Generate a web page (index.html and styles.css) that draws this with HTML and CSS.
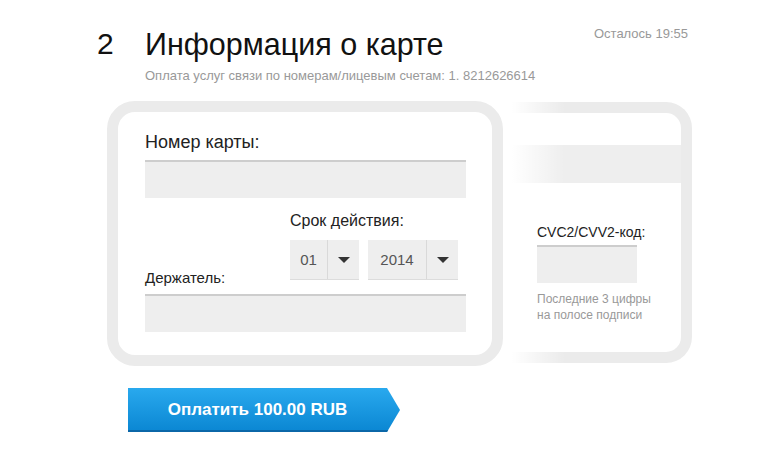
FILE: index.html
```html
<!DOCTYPE html>
<html lang="ru">
<head>
    <meta charset="UTF-8">
    <meta name="viewport" content="width=device-width, initial-scale=1.0">
    <title>Информация о карте</title>
    <link rel="stylesheet" href="styles.css">
</head>
<body>
    <div class="page">
        <div class="header">
            <div class="step">2</div>
            <h1 class="title">Информация о карте</h1>
            <div class="timer">Осталось 19:55</div>
        </div>
        <div class="subtitle">Оплата услуг связи по номерам/лицевым счетам: 1. 8212626614</div>

        <div class="cards">
            <div class="card-front">
                <div class="label-big">Номер карты:</div>
                <div class="field field-wide field-number"></div>

                <div class="row">
                    <div class="holder-label">Держатель:</div>
                    <div class="expiry">
                        <div class="label">Срок действия:</div>
                        <div class="selects">
                            <div class="select">
                                <span class="select-value month">01</span>
                                <span class="select-arrow"></span>
                            </div>
                            <div class="select">
                                <span class="select-value year">2014</span>
                                <span class="select-arrow"></span>
                            </div>
                        </div>
                    </div>
                </div>

                <div class="field field-wide"></div>
            </div>

            <div class="card-back">
                <div class="stripe"></div>
                <div class="cvc">
                    <div class="label-cvc">CVC2/CVV2-код:</div>
                    <div class="field field-cvc"></div>
                    <div class="hint">Последние 3 цифры<br>на полосе подписи</div>
                </div>
            </div>
        </div>

        <button class="pay-btn">Оплатить 100.00 RUB</button>
    </div>
</body>
</html>
```

FILE: styles.css
```css
body {
    margin: 0;
    font-family: "Liberation Sans", Arial, sans-serif;
    background-color: #fff;
    color: #222;
}

.page {
    width: 595px;
    margin-left: 97px;
    padding-top: 26px;
}

.header {
    display: flex;
    align-items: flex-start;
}

.step {
    width: 48px;
    font-size: 30px;
    line-height: 36px;
    color: #111;
}

.title {
    flex-grow: 1;
    margin: 0;
    font-size: 30.5px;
    line-height: 36px;
    font-weight: normal;
    color: #111;
}

.timer {
    margin-right: 4px;
    font-size: 13px;
    line-height: 16px;
    color: #999;
}

.subtitle {
    margin: 6px 0 0 48px;
    font-size: 13px;
    line-height: 16px;
    color: #999;
}

.cards {
    display: flex;
    align-items: flex-start;
    margin: 17px 0 0 10px;
}

.card-front {
    position: relative;
    z-index: 1;
    flex-shrink: 0;
    width: 347px;
    border: 11px solid #ebebeb;
    border-radius: 28px;
    background-color: #fff;
    padding: 19px 0 23px 27px;
}

.label-big {
    font-size: 18px;
    line-height: 22px;
    color: #222;
}

.field {
    box-sizing: border-box;
    height: 38px;
    background-color: #eeeeee;
    border-top: 2px solid #cdcdcd;
}

.field-wide {
    width: 321px;
}

.field-number {
    margin-top: 7px;
}

.row {
    display: flex;
    align-items: flex-end;
    margin-top: 13px;
}

.holder-label {
    width: 145px;
    margin-bottom: 7px;
    font-size: 15px;
    line-height: 18px;
    color: #222;
}

.expiry {
    margin-bottom: 15px;
}

.label {
    font-size: 16px;
    line-height: 20px;
    color: #222;
}

.selects {
    display: flex;
    gap: 9px;
    margin-top: 9px;
}

.select {
    display: flex;
    height: 39px;
    background-color: #eeeeee;
    box-shadow: 0 1px 0 #dcdcdc;
}

.select-value {
    display: flex;
    align-items: center;
    justify-content: center;
    font-size: 15px;
    color: #555;
    border-right: 1px solid #d9d9d9;
}

.select-value.month {
    width: 37px;
}

.select-value.year {
    width: 58px;
}

.select-arrow {
    display: flex;
    align-items: center;
    justify-content: center;
    width: 31px;
}

.select-arrow::before {
    content: "";
    border-left: 6px solid transparent;
    border-right: 6px solid transparent;
    border-top: 6px solid #333;
}

.card-back {
    position: relative;
    flex-shrink: 0;
    width: 178px;
    height: 239px;
    margin-top: 1px;
    border-top: 11px solid #ebebeb;
    border-right: 11px solid #ebebeb;
    border-bottom: 11px solid #ebebeb;
    border-radius: 0 26px 26px 0;
}

/* fade the left end of the back card */
.card-back::after {
    content: "";
    position: absolute;
    left: 0;
    top: -11px;
    bottom: -11px;
    width: 62px;
    background: linear-gradient(to right, #fff 9px, rgba(255, 255, 255, 0) 62px);
}

.stripe {
    height: 38px;
    margin-top: 32px;
    background-color: #eeeeee;
}

.cvc {
    position: relative;
    z-index: 2;
    padding-left: 34px;
    margin-top: 41px;
}

.label-cvc {
    font-size: 14px;
    line-height: 17px;
    color: #222;
}

.field-cvc {
    width: 100px;
    margin-top: 4px;
}

.hint {
    margin-top: 8px;
    font-size: 12px;
    line-height: 16px;
    color: #999;
}

.pay-btn {
    display: block;
    width: 272px;
    height: 44px;
    margin: 22px 0 0 31px;
    padding: 0 13px 0 0;
    border: none;
    background: linear-gradient(#29a9ee, #0a86d2);
    box-shadow: inset 0 -2px 0 #0b67a8;
    clip-path: polygon(0 0, 259px 0, 272px 22px, 259px 44px, 0 44px);
    color: #fff;
    font-family: "Liberation Sans", Arial, sans-serif;
    font-size: 17px;
    font-weight: bold;
    cursor: pointer;
}
```
